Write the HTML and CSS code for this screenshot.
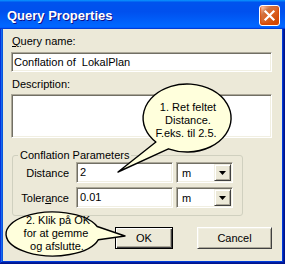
FILE: index.html
```html
<!DOCTYPE html>
<html>
<head>
<meta charset="utf-8">
<title>Query Properties</title>
<link rel="stylesheet" href="styles.css">
</head>
<body>
<div class="window">
  <div class="titlebar">
    <span class="title">Query Properties</span>
    <button class="close" aria-label="Close"><svg width="13" height="13" viewBox="0 0 13 13"><path d="M2.5 2.5 L10.5 10.5 M10.5 2.5 L2.5 10.5" stroke="#fff" stroke-width="2.2" stroke-linecap="square" fill="none"/></svg></button>
  </div>
  <div class="client">
    <div class="label"><u>Q</u>uery name:</div>
    <div class="edit name">Conflation of&nbsp; LokalPlan</div>
    <div class="label desc-label">Description:</div>
    <div class="edit desc"></div>
    <fieldset class="group">
      <legend>Conflation Parameters</legend>
      <div class="row">
        <span class="plabel">Distance</span>
        <div class="edit num">2</div>
        <div class="combo"><span class="cval">m</span><span class="drop"><svg width="7" height="4" viewBox="0 0 7 4"><path d="M0 0 H7 L3.5 4 Z" fill="#000"/></svg></span></div>
      </div>
      <div class="row">
        <span class="plabel">Toler<u>a</u>nce</span>
        <div class="edit num">0.01</div>
        <div class="combo"><span class="cval">m</span><span class="drop"><svg width="7" height="4" viewBox="0 0 7 4"><path d="M0 0 H7 L3.5 4 Z" fill="#000"/></svg></span></div>
      </div>
    </fieldset>
    <div class="buttons">
      <button class="btn ok">OK</button>
      <button class="btn cancel">Cancel</button>
    </div>
  </div>
  <svg class="callouts" width="285" height="264" viewBox="0 0 285 264">
    <path class="bubble" d="M168.4,148.8 A44,34 0 1 0 155.9,142 L118,172 Z"/>
    <text class="ct" x="188" y="111">1. Ret feltet</text>
    <text class="ct" x="188" y="124">Distance.</text>
    <text class="ct" x="186" y="137">F.eks. til 2.5.</text>
    <path class="bubble" d="M98.4,239.7 A47,22 0 1 1 97.2,226.5 L125,236 Z"/>
    <text class="ct" x="58" y="224">2. Klik på OK</text>
    <text class="ct" x="56" y="237">for at gemme</text>
    <text class="ct" x="57" y="250">og afslutte.</text>
  </svg>
</div>
</body>
</html>
```
FILE: styles.css
```css
* { box-sizing: border-box; }
html, body { margin: 0; padding: 0; }
body {
  width: 285px;
  height: 264px;
  overflow: hidden;
  background: #ffffff;
  font-family: "Liberation Sans", Arial, sans-serif;
  font-size: 11px;
  color: #000;
}
.window {
  position: relative;
  width: 285px;
  height: 264px;
  display: flex;
  flex-direction: column;
  background: #0054e3;
  box-shadow: inset -1px -1px #00138c, inset 1px 1px #0831d9, inset -2px -2px #001ea0, inset 2px 2px #166aee, inset -3px -3px #003bda, inset 3px 3px #0855dd;
}
.titlebar {
  flex: none;
  height: 29px;
  display: flex;
  align-items: center;
  justify-content: space-between;
  padding: 0 5px 0 7px;
  background: linear-gradient(180deg, #0997ff, #0053ee 8%, #0050ee 40%, #0066ff 88%, #0066ff 93%, #005bff 95%, #003dd7 96%, #003dd7);
}
.title {
  color: #fff;
  font-weight: bold;
  font-size: 13px;
  line-height: 13px;
  margin-top: 2px;
  text-shadow: 1px 1px 0 #0f1089;
}
.close {
  width: 21px;
  height: 21px;
  margin-top: 2px;
  padding: 0;
  display: flex;
  align-items: center;
  justify-content: center;
  border: 1px solid #fff;
  border-radius: 3px;
  background: radial-gradient(circle at 90% 90%, #cc4600 0%, #dc6527 55%, #cd7546 70%, #ffccb2 90%, #ffffff 100%);
  box-shadow: inset 0 -1px 2px 1px #da4600;
}
.client {
  flex: 1;
  margin: 0 3px 3px 3px;
  background: #ece9d8;
  padding: 6px 10px 0 8px;
  display: flex;
  flex-direction: column;
}
.label {
  height: 13px;
  line-height: 13px;
  padding-left: 1px;
}
.desc-label { margin-top: 6px; }
.edit {
  background: #fff;
  border: 1px solid;
  border-color: #aca899 #ffffff #ffffff #aca899;
  box-shadow: inset 1px 1px 0 #716f64, inset -1px -1px 0 #f1efe2;
  padding-left: 2px;
  white-space: pre;
}
.name {
  margin-top: 4px;
  height: 20px;
  line-height: 18px;
}
.desc {
  margin-top: 3px;
  height: 44px;
}
.group {
  margin: 11px 0 0 1px;
  width: 231px;
  padding: 1px 0 7px 0;
  border: 1px solid #d0d0bf;
  border-radius: 3px;
  display: flex;
  flex-direction: column;
  gap: 4px;
}
.group legend {
  margin-left: 5px;
  padding: 0 2px;
  line-height: 12px;
  height: 12px;
}
.row {
  display: flex;
  align-items: center;
  height: 21px;
}
.plabel {
  width: 56px;
  text-align: right;
  margin-right: 7px;
}
.num {
  width: 97px;
  height: 21px;
  line-height: 19px;
  padding-left: 3px;
}
.combo {
  margin-left: 3px;
  width: 57px;
  height: 21px;
  padding: 1px;
  display: flex;
  align-items: center;
  background: #fff;
  border: 1px solid;
  border-color: #aca899 #ffffff #ffffff #aca899;
  box-shadow: inset 1px 1px 0 #716f64, inset -1px -1px 0 #f1efe2;
}
.cval {
  flex: 1;
  padding-left: 4px;
}
.drop {
  width: 17px;
  height: 17px;
  display: flex;
  align-items: center;
  justify-content: center;
  background: #ece9d8;
  border: 1px solid;
  border-color: #f1efe2 #404040 #404040 #f1efe2;
  box-shadow: inset 1px 1px 0 #fff, inset -1px -1px 0 #aca899;
}
.buttons {
  margin-top: 11px;
  display: flex;
  justify-content: flex-end;
  gap: 24px;
}
.btn {
  height: 22px;
  padding: 0;
  font-family: "Liberation Sans", Arial, sans-serif;
  font-size: 11px;
  color: #000;
  background: #ece9d8;
}
.ok {
  width: 58px;
  border: 1px solid #000;
  box-shadow: inset 1px 1px 0 #fff, inset -1px -1px 0 #404040, inset -2px -2px 0 #aca899;
}
.cancel {
  width: 75px;
  border: 1px solid;
  border-color: #fff #404040 #404040 #fff;
  box-shadow: inset 1px 1px 0 #f1efe2, inset -1px -1px 0 #aca899;
}
.callouts {
  position: absolute;
  left: 0;
  top: 0;
}
.bubble {
  fill: #ffffdc;
  stroke: #000;
  stroke-width: 1.4;
  stroke-linejoin: round;
}
.ct {
  font-family: "Liberation Sans", Arial, sans-serif;
  font-size: 11px;
  text-anchor: middle;
  fill: #000;
}
```
